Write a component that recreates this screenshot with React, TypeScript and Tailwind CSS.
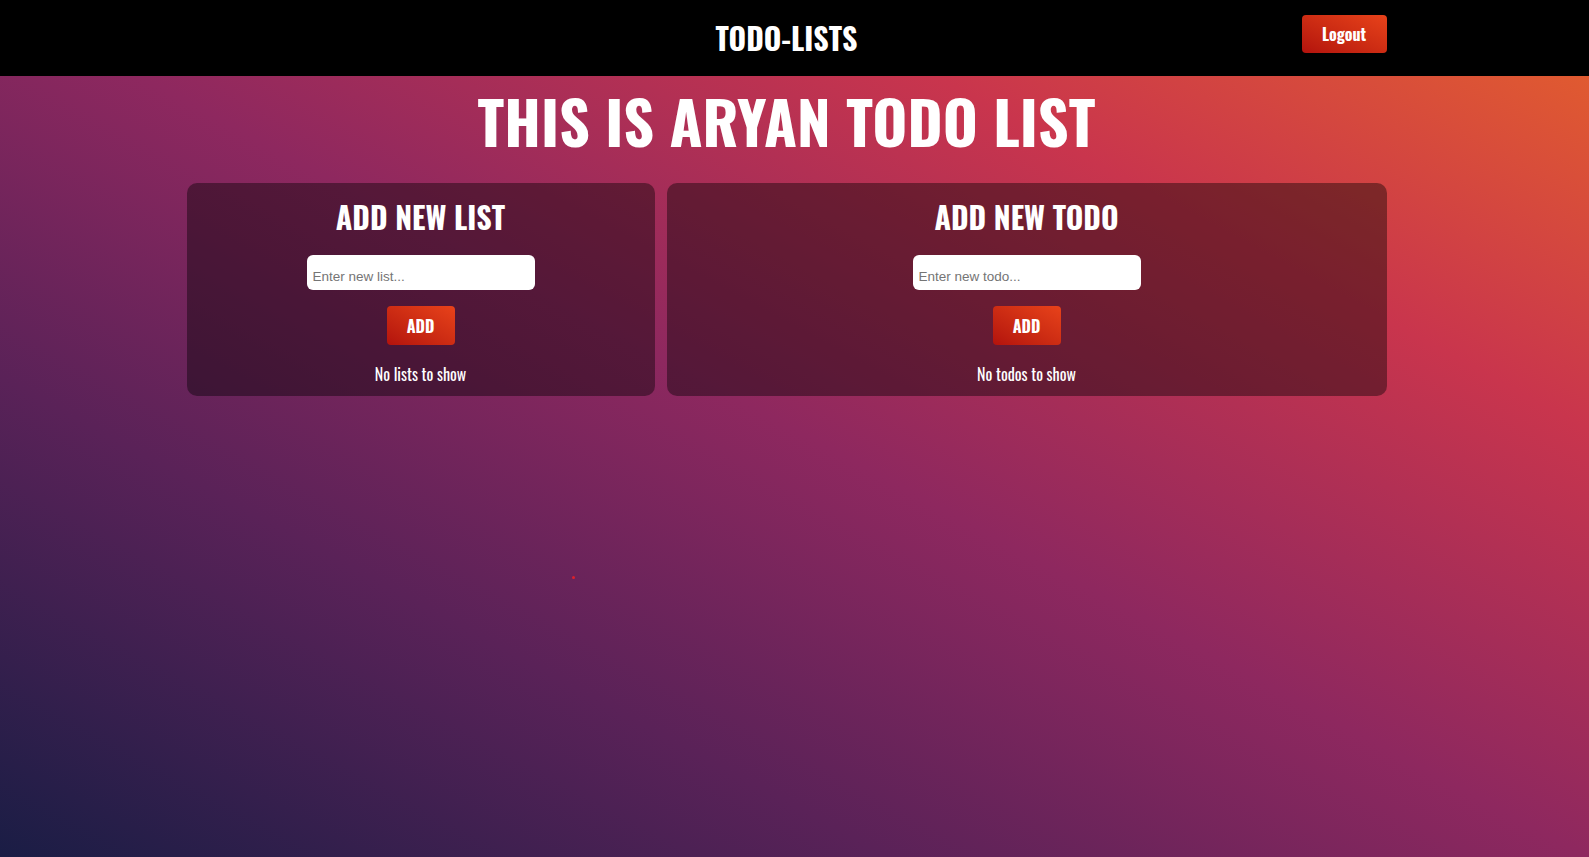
import { useState } from "react";

const display = "font-['Oswald','Liberation_Sans_Narrow','DejaVu_Sans_Condensed','Liberation_Sans',sans-serif]";

const Card = ({
    title,
    placeholder,
    empty,
    className,
}: {
    title: string;
    placeholder: string;
    empty: string;
    className: string;
}) => {
    const [value, setValue] = useState("");
    return (
        <div
            className={`flex flex-col items-center rounded-[10px] bg-black/40 pt-[10px] pb-[10px] ${className}`}
        >
            <h2 className={`${display} text-[30px] leading-[48px] font-bold text-white`}>
                {title}
            </h2>
            <input
                value={value}
                onChange={(e) => setValue(e.target.value)}
                placeholder={placeholder}
                className="mt-[14px] h-[35px] w-[228px] rounded-[6px] bg-white px-[6px] pt-[7px] font-['Liberation_Sans',Arial,sans-serif] text-[13.5px] text-gray-800 outline-none placeholder:text-[#757575]"
            />
            <button
                className={`${display} mt-[16px] h-[39px] w-[68px] rounded-[4px] bg-gradient-to-tr from-[#b3120d] to-[#e8421a] text-[16px] font-bold text-white`}
            >
                ADD
            </button>
            <p className={`${display} mt-[17px] text-[16px] leading-[24px] text-white`}>
                {empty}
            </p>
        </div>
    );
};

export default function App() {
    return (
        <div className="relative min-h-[857px] w-full bg-[linear-gradient(to_top_right,#1a1d45_0%,#5a2258_28%,#8e285f_50%,#c9354d_75%,#e5622a_100%)]">
            <header className="w-full bg-black">
                <div className="mx-auto flex h-[76px] w-[1200px] -translate-x-[8px] items-start justify-between">
                    <div className="w-[85px]" />
                    <h1 className={`${display} mt-[16px] text-[30px] leading-[44px] font-bold text-white`}>
                        TODO-LISTS
                    </h1>
                    <button
                        className={`${display} mt-[15px] h-[38px] w-[85px] rounded-[4px] bg-gradient-to-tr from-[#b3120d] to-[#e8421a] text-[16px] font-bold text-white`}
                    >
                        Logout
                    </button>
                </div>
            </header>
            <main className="mx-auto flex w-[1200px] -translate-x-[8px] flex-col items-center">
                <h1
                    className={`${display} mt-[8px] text-[60px] leading-[72px] font-bold text-white`}
                >
                    THIS IS ARYAN TODO LIST
                </h1>
                <div className="mt-[27px] flex w-full gap-[12px]">
                    <Card
                        title="ADD NEW LIST"
                        placeholder="Enter new list..."
                        empty="No lists to show"
                        className="w-[468px]"
                    />
                    <Card
                        title="ADD NEW TODO"
                        placeholder="Enter new todo..."
                        empty="No todos to show"
                        className="flex-1"
                    />
                </div>
            </main>
            <span className="absolute top-[576px] left-[572px] h-[3px] w-[3px] rounded-full bg-[#e0202a]" />
        </div>
    );
}
